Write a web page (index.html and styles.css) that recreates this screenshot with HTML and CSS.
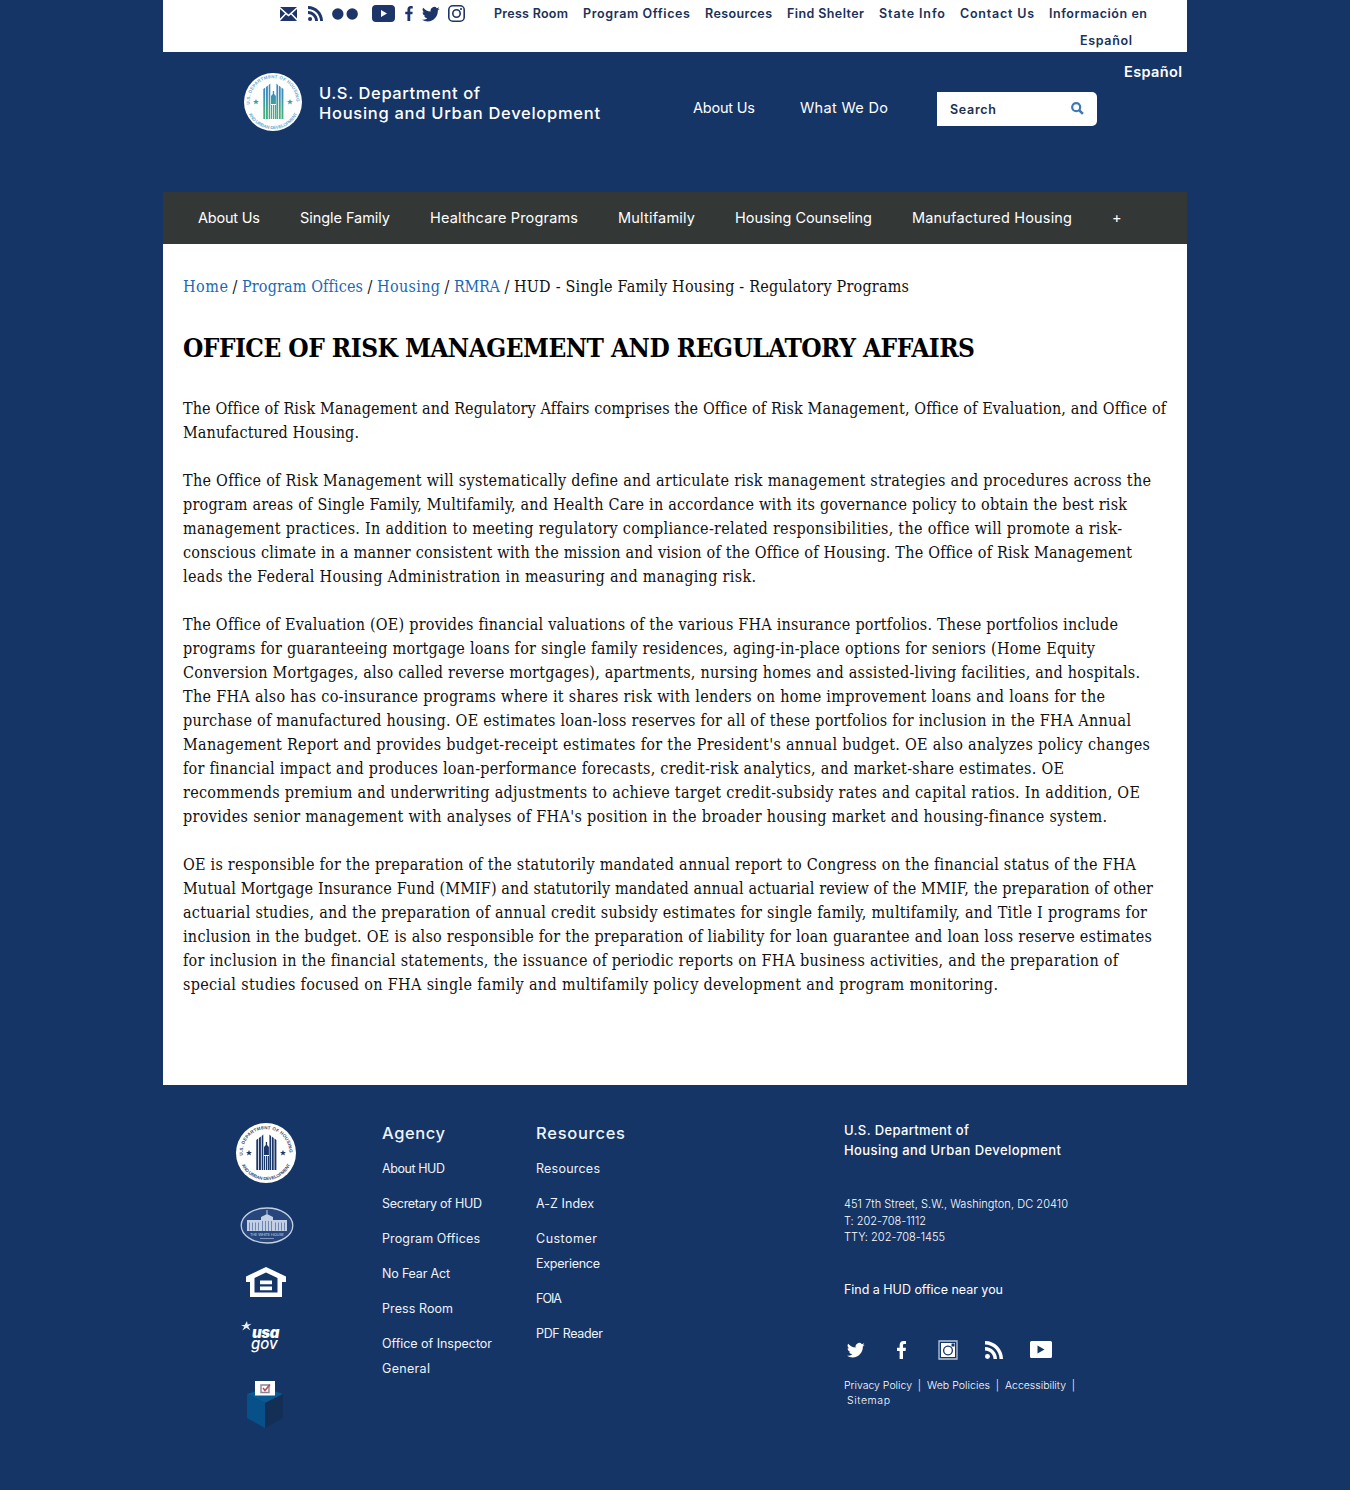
FILE: index.html
```html
<!DOCTYPE html>
<html lang="en">
<head>
<meta charset="utf-8">
<title>HUD - Single Family Housing - Regulatory Programs</title>
<link rel="stylesheet" href="styles.css">
</head>
<body>
<svg class="defs" width="0" height="0">
  <defs>
    <symbol id="bird" viewBox="0 0 24 24"><path d="M23.6 4.9a9.700 9.700 0 0 1-2.800.8 4.900 4.900 0 0 0 2.100-2.700 9.700 9.700 0 0 1-3.100 1.200 4.850 4.850 0 0 0-8.300 4.400A13.800 13.800 0 0 1 1.600 3.500a4.850 4.850 0 0 0 1.500 6.500 4.800 4.800 0 0 1-2.200-.6v.1a4.850 4.850 0 0 0 3.900 4.750 4.900 4.900 0 0 1-2.200.1 4.850 4.850 0 0 0 4.500 3.350A9.750 9.750 0 0 1 0 19.700a13.700 13.700 0 0 0 7.400 2.200c9 0 14-7.600 13.700-14.500a9.900 9.900 0 0 0 2.500-2.500z"/></symbol>
    <symbol id="face" viewBox="0 0 12 24"><path d="M3.500 24V13.200H0V9h3.500V5.700C3.500 2 5.500 0 8.800 0c1.400 0 2.700.1 3.200.2V4H9.900C8.300 4 8 4.800 8 5.900V9h3.900l-.5 4.200H8V24z"/></symbol>
    <symbol id="feed" viewBox="0 0 24 24"><circle cx="3.300" cy="20.700" r="3.300"/><path d="M0 8v4.600c6.300 0 11.400 5.100 11.400 11.400H16C16 15.200 8.800 8 0 8z"/><path d="M0 0v4.600c10.700 0 19.400 8.700 19.400 19.400H24C24 10.700 13.300 0 0 0z"/></symbol>
    <symbol id="towers" viewBox="0 0 60 60">
      <path d="M20.300 47V17l1.900-1.500V47zM23 47V15l1.900-1.500V47zM25.700 47V13l1.600-1.500V47zM33.400 47V11.500L35 13v34zM35.800 47V13.500l1.900 1.500v32zM38.500 47V15.500l1.900 1.500v30zM28 47V33h1.200v14zM30 47V33h1.200v14zM31.900 47V33h1.100v14zM28 32v-8l1.800-2v-3h1.300v3l1.800 2v8z"/>
      <path d="M13 27l.8 2h2.200l-1.700 1.300.6 2.200-1.900-1.300-1.900 1.300.6-2.200-1.700-1.300h2.200zM47 27l.8 2H50l-1.700 1.300.6 2.200-1.900-1.300-1.900 1.300.6-2.200-1.700-1.300h2.200z"/>
    </symbol>
    <linearGradient id="teal" x1="0" y1="0" x2="0" y2="1"><stop offset=".3" stop-color="#3c8dbc"/><stop offset=".8" stop-color="#45ad82"/></linearGradient>
    <path id="arc-top" d="M6.900 32.500A23.300 23.300 0 1 1 53.100 32.500"/>
    <path id="arc-bottom" d="M4.600 39.200A27 27 0 0 0 55.400 39.200"/>
  </defs>
</svg>

<div class="page">
  <div class="topbar">
    <div class="top-social">
      <svg width="17" height="14" viewBox="0 0 17 14"><path d="M0 0h17L8.500 7.500zM0 2l5 4.500L0 11.500zM17 2l-5 4.500 5 5zM0 14l6-6.500 2.500 2L11 7.500l6 6.500z"/></svg>
      <svg width="15" height="15"><use href="#feed"/></svg>
      <svg width="26" height="12" viewBox="0 0 26 12"><circle cx="5.800" cy="6" r="5.700"/><circle cx="20.200" cy="6" r="5.700"/></svg>
      <svg width="23" height="17" viewBox="0 0 23 17"><path fill-rule="evenodd" d="M4 0h15q4 0 4 4v9q0 4-4 4H4q-4 0-4-4V4q0-4 4-4zm5 5v7l6-3.500z"/></svg>
      <svg width="8" height="15"><use href="#face"/></svg>
      <svg width="18" height="18"><use href="#bird"/></svg>
      <svg width="17" height="17" viewBox="0 0 17 17"><g fill="none" stroke="#1d3568" stroke-width="1.600"><rect x=".8" y=".8" width="15.400" height="15.400" rx="4"/><circle cx="8.500" cy="8.500" r="3.700"/></g><circle cx="13" cy="4" r="1.100"/></svg>
    </div>
    <div class="top-links">
      <div><a data-w="74">Press Room</a><a data-w="107">Program Offices</a><a data-w="67">Resources</a><a data-w="77">Find Shelter</a><a data-w="66">State Info</a><a data-w="74">Contact Us</a><a data-w="98">Información en</a></div>
      <div class="second"><a data-w="52">Español</a></div>
    </div>
  </div>

  <header>
    <svg class="seal" width="60" height="60" viewBox="0 0 60 60"><circle cx="30" cy="30" r="29" fill="#fff"/><use href="#towers" fill="url(#teal)"/><g class="seal-text light"><text><textPath href="#arc-top" textLength="76">U.S. DEPARTMENT OF HOUSING</textPath></text><text><textPath href="#arc-bottom" startOffset="3" textLength="60">AND URBAN DEVELOPMENT</textPath></text></g></svg>
    <div class="brand"><span data-w="161">U.S. Department of</span><span data-w="281">Housing and Urban Development</span></div>
    <nav class="head-nav"><a data-w="62">About Us</a><a data-w="88">What We Do</a></nav>
    <div class="search"><span data-w="46">Search</span><svg width="13" height="13" viewBox="0 0 13 13"><circle cx="5.200" cy="5.200" r="4" fill="none" stroke="#3f78b5" stroke-width="2.200"/><path d="M8.300 8.300l3.600 3.600" stroke="#3f78b5" stroke-width="2.600"/></svg></div>
    <a class="lang" data-w="58">Español</a>
  </header>

  <nav class="menu"><a data-w="62">About Us</a><a data-w="90">Single Family</a><a data-w="148">Healthcare Programs</a><a data-w="77">Multifamily</a><a data-w="137">Housing Counseling</a><a data-w="160">Manufactured Housing</a><a data-w="9">+</a></nav>

  <main>
    <div class="crumbs"><a data-w="45">Home</a><i>/</i><a data-w="121">Program Offices</a><i>/</i><a data-w="63">Housing</a><i>/</i><a data-w="46">RMRA</a><i>/</i><span data-w="395">HUD - Single Family Housing - Regulatory Programs</span></div>
    <h1><span data-w="792">OFFICE OF RISK MANAGEMENT AND REGULATORY AFFAIRS</span></h1>
    <p><span data-w="983">The Office of Risk Management and Regulatory Affairs comprises the Office of Risk Management, Office of Evaluation, and Office of</span>
    <span data-w="176">Manufactured Housing.</span></p>
    <p><span data-w="968">The Office of Risk Management will systematically define and articulate risk management strategies and procedures across the</span>
    <span data-w="944">program areas of Single Family, Multifamily, and Health Care in accordance with its governance policy to obtain the best risk</span>
    <span data-w="939">management practices. In addition to meeting regulatory compliance-related responsibilities, the office will promote a risk-</span>
    <span data-w="949">conscious climate in a manner consistent with the mission and vision of the Office of Housing. The Office of Risk Management</span>
    <span data-w="573">leads the Federal Housing Administration in measuring and managing risk.</span></p>
    <p><span data-w="935">The Office of Evaluation (OE) provides financial valuations of the various FHA insurance portfolios. These portfolios include</span>
    <span data-w="912">programs for guaranteeing mortgage loans for single family residences, aging-in-place options for seniors (Home Equity</span>
    <span data-w="957">Conversion Mortgages, also called reverse mortgages), apartments, nursing homes and assisted-living facilities, and hospitals.</span>
    <span data-w="922">The FHA also has co-insurance programs where it shares risk with lenders on home improvement loans and loans for the</span>
    <span data-w="948">purchase of manufactured housing. OE estimates loan-loss reserves for all of these portfolios for inclusion in the FHA Annual</span>
    <span data-w="967">Management Report and provides budget-receipt estimates for the President's annual budget. OE also analyzes policy changes</span>
    <span data-w="881">for financial impact and produces loan-performance forecasts, credit-risk analytics, and market-share estimates. OE</span>
    <span data-w="957">recommends premium and underwriting adjustments to achieve target credit-subsidy rates and capital ratios. In addition, OE</span>
    <span data-w="924">provides senior management with analyses of FHA's position in the broader housing market and housing-finance system.</span></p>
    <p><span data-w="953">OE is responsible for the preparation of the statutorily mandated annual report to Congress on the financial status of the FHA</span>
    <span data-w="970">Mutual Mortgage Insurance Fund (MMIF) and statutorily mandated annual actuarial review of the MMIF, the preparation of other</span>
    <span data-w="964">actuarial studies, and the preparation of annual credit subsidy estimates for single family, multifamily, and Title I programs for</span>
    <span data-w="969">inclusion in the budget. OE is also responsible for the preparation of liability for loan guarantee and loan loss reserve estimates</span>
    <span data-w="935">for inclusion in the financial statements, the issuance of periodic reports on FHA business activities, and the preparation of</span>
    <span data-w="815">special studies focused on FHA single family and multifamily policy development and program monitoring.</span></p>
  </main>

  <footer>
    <div class="logos">
      <svg width="60" height="60" viewBox="0 0 60 60"><circle cx="30" cy="30" r="30" fill="#fff"/><use href="#towers" fill="#1a3767"/><g class="seal-text"><text><textPath href="#arc-top" textLength="76">U.S. DEPARTMENT OF HOUSING</textPath></text><text><textPath href="#arc-bottom" startOffset="3" textLength="60">AND URBAN DEVELOPMENT</textPath></text></g></svg>
      <svg class="whitehouse" width="54" height="37" viewBox="0 0 54 37"><ellipse cx="27" cy="18.500" rx="25.800" ry="17.500" fill="#27477c" stroke="#c3d0e4" stroke-width="1.300"/><path fill="#c3d0e4" d="M7 13h14v-3l6-3 6 3v3h14v11H7zM26.500 3h1v5h-1z"/><path stroke="#6d87b0" stroke-width="1" d="M9.500 15.500v8M12.500 15.500v8M15.500 15.500v8M18.500 15.500v8M22.500 14v10M25.500 14v10M28.500 14v10M31.500 14v10M35.500 15.500v8M38.500 15.500v8M41.500 15.500v8M44.500 15.500v8"/><text x="27" y="29" textLength="34">THE WHITE HOUSE</text><path d="M20 31.500h14" stroke="#7f96bb" stroke-width="1"/></svg>
      <svg class="equal" width="40" height="30" viewBox="0 0 40 30"><path fill="#fff" fill-rule="evenodd" d="M20 0l20 9.500V15h-4v15H4V15H0V9.500zm0 5.500L8.500 11v14.500h23V11z"/><path fill="#fff" d="M14 13.500h12v3.700H14zM14 19.500h12v3.700H14z"/></svg>
      <svg class="usagov" width="40" height="34" viewBox="0 0 40 34"><path fill="#e8f0fa" d="M6 0l.6 3.500 3.900-.8-3.300 2.700 2.200 4-3.900-2.600L1.300 9.500l2-3.800L0 4h3.700z"/><text><tspan class="usa" x="11" y="16.500">usa</tspan><tspan class="gov" x="10" y="28">gov</tspan></text></svg>
      <svg class="ballot" width="36" height="47" viewBox="0 0 36 47"><path fill="#075a92" d="M0 13l18-6 18 6-18 9z"/><path fill="#08508a" d="M0 13l18 9v25L0 37z"/><path fill="#142f56" d="M36 13l-18 9v25l18-10z"/><path fill="#fff" d="M8 0h20v14.500H8z"/><path fill="none" stroke="#8a8395" stroke-width="1.400" d="M14 4h8v7.500h-8z"/><path fill="none" stroke="#bd4a58" stroke-width="1.600" d="M16 7l2 2.500 5-6"/></svg>
    </div>
    <section class="col agency"><h2><span data-w="63">Agency</span></h2>
      <ul><li><a data-w="63">About HUD</a></li><li><a data-w="100">Secretary of HUD</a></li><li><a data-w="98">Program Offices</a></li><li><a data-w="68">No Fear Act</a></li><li><a data-w="71">Press Room</a></li><li><a data-w="110">Office of Inspector</a> <a data-w="48">General</a></li></ul></section>
    <section class="col"><h2><span data-w="89">Resources</span></h2>
      <ul><li><a data-w="64">Resources</a></li><li><a data-w="58">A-Z Index</a></li><li><a data-w="61">Customer</a> <a data-w="64">Experience</a></li><li><a data-w="26">FOIA</a></li><li><a data-w="67">PDF Reader</a></li></ul></section>
    <section class="contact">
      <div class="dept"><span data-w="125">U.S. Department of</span><span data-w="217">Housing and Urban Development</span></div>
      <div class="address"><span data-w="224">451 7th Street, S.W., Washington, DC 20410</span><span data-w="82">T: 202-708-1112</span><span data-w="101">TTY: 202-708-1455</span></div>
      <div class="near"><a data-w="159">Find a HUD office near you</a></div>
      <div class="social">
        <svg width="18" height="18"><use href="#bird"/></svg>
        <svg width="9" height="18"><use href="#face"/></svg>
        <svg width="20" height="20" viewBox="0 0 20 20"><path fill="none" stroke="#b9c7dd" stroke-width="1.300" d="M1 1h18v18H1z"/><path fill-rule="evenodd" d="M3 3h14v14H3zm7 2.500a5 5 0 1 0 .01 0zM13.500 3.500v3h3v-3z"/><circle cx="10" cy="10.500" r="3.700"/></svg>
        <svg width="18" height="18"><use href="#feed"/></svg>
        <svg width="22" height="17" viewBox="0 0 22 17"><path fill-rule="evenodd" d="M1.500 0h19Q22 0 22 1.500v14q0 1.500-1.500 1.500h-19Q0 17 0 15.500v-14Q0 0 1.500 0zM7.500 4.500v8l7-4z"/></svg>
      </div>
      <div class="legal"><div><a data-w="68">Privacy Policy</a><i>|</i><a data-w="63">Web Policies</a><i>|</i><a data-w="61">Accessibility</a><i>|</i></div><div class="sitemap"><a data-w="43">Sitemap</a></div></div>
    </section>
  </footer>
</div>
<script src="fit.js"></script>
</body>
</html>
```
FILE: styles.css
```css
* { box-sizing: border-box; }
body { margin: 0; background: #163567; font-family: Inter, "Open Sans", sans-serif; color: #fff; font-variant-ligatures: none; }
svg { display: block; flex: none; }
.defs { position: absolute; }
[data-w] { display: inline-block; white-space: nowrap; }
i { font-style: normal; }
.page { width: 1024px; margin: 0 auto; }

.topbar { display: flex; height: 52px; background: #fff; color: #1a3159; padding-left: 117px; }
.top-social { display: flex; align-items: center; height: 27px; fill: #1d3568; width: 214px; }
.top-social svg + svg { margin-left: 11px; }
.top-social svg:nth-child(3) { margin-left: 9px; }
.top-social svg:nth-child(4) { margin-left: 14px; }
.top-social svg:nth-child(5) { margin-left: 10px; }
.top-social svg:nth-child(6) { margin-left: 9px; }
.top-social svg:nth-child(7) { margin-left: 8px; }
.top-links { font-size: 12.500px; font-weight: 600; line-height: 27px; }
.top-links div { display: flex; gap: 15px; }
.top-links .second { padding-left: 586px; }

header { display: flex; align-items: flex-start; height: 140px; padding: 20px 5px 0 80px; }
.brand { display: flex; flex-direction: column; margin: 11px 0 0 16px; width: 374px; font-size: 16.500px; font-weight: 500; line-height: 20px; }
.head-nav { display: flex; gap: 45px; margin-top: 26px; width: 244px; font-size: 14.500px; line-height: 20px; }
.search { display: flex; justify-content: space-between; width: 160px; height: 34px; margin-top: 20px; padding: 10px 13px; background: #fff; border-radius: 0 5px 5px 0; color: #1c304f; font-size: 12.500px; font-weight: 600; line-height: 15px; }
.seal { margin-left: 0; }
.lang { margin: -10px 0 0 27px; font-size: 14.500px; font-weight: 600; line-height: 20px; }

.menu { display: flex; gap: 40px; height: 52px; padding-left: 35px; background: #333837; font-size: 14.500px; line-height: 52px; }

main { height: 841px; padding: 31px 20px; background: #fff; color: #111; font: 16px/24px "DejaVu Serif Condensed", "DejaVu Serif", serif; font-stretch: condensed; font-variant-ligatures: none; }
.crumbs { display: flex; }
.crumbs a { color: #1b69b6; }
.crumbs i { width: 14px; text-align: center; }
h1 { margin: 31px 0; font-size: 26px; line-height: 36px; color: #000; }
p { margin: 0 0 24px; }
p span { display: block; }

footer { display: grid; grid-template-columns: 219px 154px 308px 1fr; height: 405px; padding-top: 38px; font-size: 12.500px; }
.logos { display: flex; flex-direction: column; align-items: center; width: 205px; }
.whitehouse { margin: 24px 0 0 3px; }
.whitehouse text { font-size: 4px; fill: #c3d0e4; text-anchor: middle; }
.equal { margin-top: 23px; }
.usagov { margin: 24px 9px 0 0; fill: #fff; }
.usa { font: italic 900 15px Inter, sans-serif; letter-spacing: -.4px; }
.gov { font: italic 500 15px Inter, sans-serif; }
.ballot { margin: 26px 2px 0 0; }
.seal-text { font: 600 4.500px "Liberation Sans", sans-serif; fill: #36496b; }
.seal-text.light { fill: #72a8ca; }
h2 { margin: 0 0 13px; font-size: 16.500px; font-weight: 500; line-height: 20px; }
ul { margin: 0; padding: 0; list-style: none; line-height: 25px; }
li { display: flex; flex-direction: column; margin-bottom: 10px; }
.col { color: #eef3fa; }
.contact { margin-top: -3px; }
.dept, .address { display: flex; flex-direction: column; }
.dept { font-size: 13px; font-weight: 500; line-height: 20px; }
.address { margin-top: 36px; font-size: 11px; font-weight: 300; line-height: 16.500px; }
.near { margin-top: 31px; line-height: 25px; }
.social { display: flex; align-items: center; height: 20px; margin: 38px 0 0 3px; fill: #fff; }
.social svg:nth-child(2) { margin-left: 32px; }
.social svg:nth-child(3) { margin-left: 32px; }
.social svg:nth-child(4) { margin-left: 27px; }
.social svg:nth-child(5) { margin-left: 27px; }
.legal { margin-top: 18px; font-size: 10.500px; font-weight: 300; line-height: 15px; }
.legal div { display: flex; }
.legal i { width: 15px; text-align: center; }
.legal .sitemap { padding-left: 3px; }
```
FILE: fit.js
```js
// Tracks each label so that it fills the width given in its data-w attribute.
document.querySelectorAll("[data-w]").forEach((el) => {
  const range = document.createRange();
  range.selectNodeContents(el);
  const target = Number(el.dataset.w);
  const natural = range.getBoundingClientRect().width;
  const gaps = el.textContent.length - 1;
  if (gaps > 0) el.style.letterSpacing = (target - natural) / gaps + "px";
  el.style.width = target + "px";
});
```
